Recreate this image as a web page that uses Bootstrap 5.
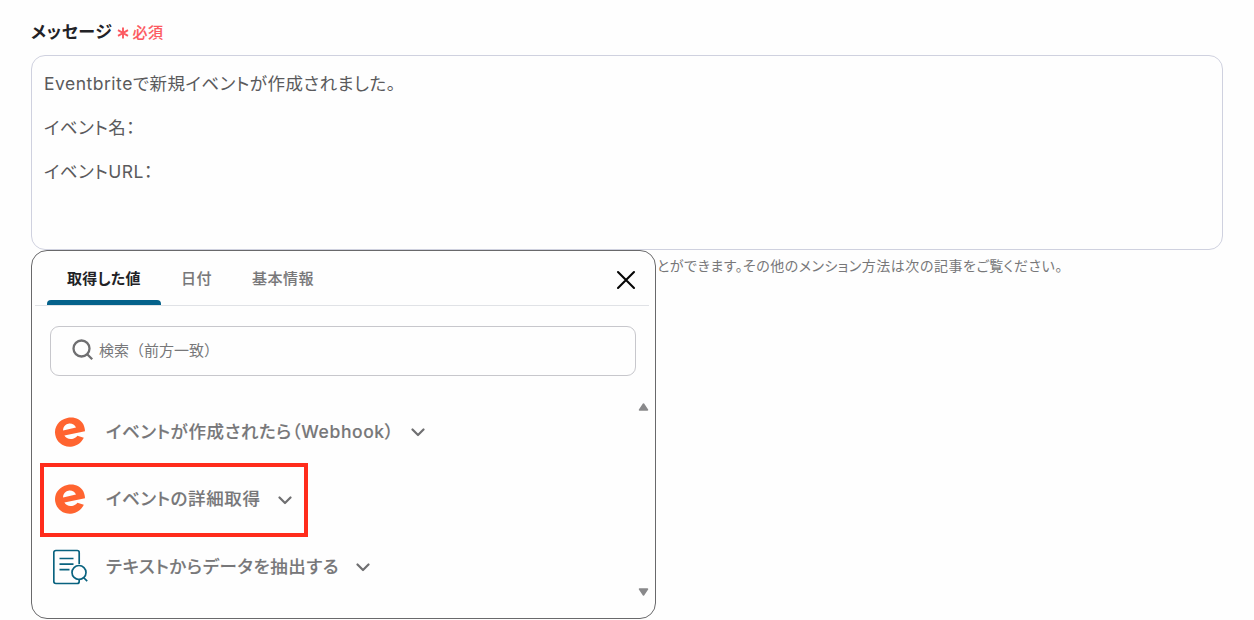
<!DOCTYPE html>
<html lang="ja">
<head>
    <meta charset="UTF-8">
    <title>メッセージ</title>
    <meta name="viewport" content="width=device-width, initial-scale=1">
    <!-- Bootstrap CDN -->
    <link href="https://cdn.jsdelivr.net/npm/bootstrap@5.3.0/dist/css/bootstrap.min.css" rel="stylesheet">
    <style>
        body {
            background: #fefefe;
            color: #5a5a5c;
            font-family: Inter, "Noto Sans CJK JP", sans-serif;
            font-feature-settings: "palt";
            height: 620px;
            overflow: hidden;
        }
        .message-form { padding: 20px 31px 0; }
        .field-label { height: 24px; line-height: 24px; margin-bottom: 11px; }
        .label-text { color: #222226; font-size: 17px; font-weight: 700; letter-spacing: .6px; }
        .required-text { color: #fc5a61; font-size: 15px; font-weight: 500; letter-spacing: .45px; padding-top: 1px; margin-left: 4px; -webkit-text-stroke: .12px; }
        .message-box {
            height: 195px;
            border: 1px solid #cfd1df;
            border-radius: 14px;
            padding: 6px 12px;
            font-size: 17.5px;
            line-height: 44px;
            letter-spacing: .5px;
        }
        .hint-text { padding-left: 626px; font-size: 14px; line-height: 20px; padding-top: 6px; color: #777779; letter-spacing: .52px; }
        .value-menu {
            top: 195px;
            left: 0;
            width: 625px;
            height: 369px;
            background: #fefefe;
            border: 1px solid #69696b;
            border-radius: 16px;
        }
        .tab-bar { height: 55px; margin: 0 6px 0 3px; padding-left: 12px; border-bottom: 1px solid #e0e2e6; }
        .tab-item { font-size: 15px; font-weight: 500; letter-spacing: .5px; line-height: 56px; color: #777779; padding: 0 20px; white-space: nowrap; -webkit-text-stroke: .12px; }
        .tab-current { width: 114px; height: 54px; letter-spacing: .25px; color: #222226; font-weight: 700; -webkit-text-stroke: 0; }
        .tab-current::after { content: ""; display: block; height: 5px; margin: -7px -20px 0; background: #05628b; border-radius: 4px 4px 0 0; }
        .close-btn { padding: 4px 13.5px 0 0; }
        .search-box { height: 50px; margin: 20px 19px 0 18px; padding-left: 21px; gap: 5px; border: 1px solid #c7c7cc; border-radius: 9px; font-size: 15px; font-feature-settings: normal; color: #777779; }
        .search-box svg { margin-top: -2px; }
        .source-list { height: 207px; margin: 22px 4px 0 8px; }
        .source-item { height: 67.5px; padding-left: 13px; font-size: 17.5px; font-weight: 500; letter-spacing: .6px; color: #777779; }
        .source-item span { -webkit-text-stroke: .12px; }
        .source-icon { width: 36px; height: 36px; margin-right: 17px; }
        .item-chevron { margin: 2px 0 0 17px; }
        .picked { top: -3px; left: 0; width: 268px; height: 74px; border: 4px solid #ff2c1c; }
        .scroll-track { width: 16px; padding: 5px 0 9px; }
    </style>
</head>
<body>
<svg class="d-none">
    <symbol id="brand-e" viewBox="0 0 36 36">
        <path fill="#ff6430" fill-rule="evenodd" d="M14.200 3.900C21 2.300 27.500 5 30.300 10.300c1.100 2.200 1.600 4.500 1.700 6.900L11.400 21.600c1.500 2.700 4.600 4 7.800 3.300 2.200-.5 3.800-1.400 5.200-3.100l6.400 1.900c-2 4.400-6.200 7.800-11.300 8.700C11 34 3.800 28.600 2.300 21 .7 13 5.800 5.700 14.200 3.900zM15.400 9.700c-3.200.7-5.400 3.300-5.300 6.700l12.900-2.900c-1.400-3-4.500-4.500-7.600-3.800z"/>
    </symbol>
    <symbol id="chevron" viewBox="0 0 14 9">
        <path fill="none" stroke="#6f6f71" stroke-width="2.200" stroke-linecap="round" stroke-linejoin="round" d="M1.500 1.500 7 7l5.500-5.500"/>
    </symbol>
</svg>
<main class="message-form">
    <div class="field-label d-flex">
        <span class="label-text">メッセージ</span>
        <span class="required-text d-flex align-items-center">
            <svg class="me-1" width="12" height="12" viewBox="0 0 12 12"><path d="M6 .5v11M1 3.200l10 5.600M11 3.200 1 8.800" stroke="#fc5a61" stroke-width="1.900" fill="none"/></svg>必須
        </span>
    </div>
    <div class="position-relative">
        <div class="message-box">
            <div>Eventbriteで新規イベントが作成されました。</div>
            <div>イベント名：</div>
            <div>イベントURL：</div>
        </div>
        <div class="hint-text">とができます。その他のメンション方法は次の記事をご覧ください。</div>

        <!-- Value picker -->
        <div class="value-menu position-absolute">
            <div class="tab-bar d-flex">
                <div class="tab-item tab-current">取得した値</div>
                <div class="tab-item">日付</div>
                <div class="tab-item">基本情報</div>
                <div class="close-btn ms-auto d-flex align-items-center">
                    <svg width="20" height="20" viewBox="0 0 20 20"><path d="m2 2 16 16M18 2 2 18" stroke="#050505" stroke-width="2.100" stroke-linecap="round"/></svg>
                </div>
            </div>
            <div class="search-box d-flex align-items-center">
                <svg width="22" height="22" viewBox="0 0 22 22" fill="none" stroke="#6f6f71" stroke-width="2.300"><circle cx="9.500" cy="9.500" r="8"/><path d="m15.200 15.200 5 5"/></svg>
                <span>検索（前方一致）</span>
            </div>
            <div class="source-list d-flex">
                <div class="flex-grow-1">
                    <div class="source-item d-flex align-items-center">
                        <svg class="source-icon"><use href="#brand-e"/></svg>
                        <span>イベントが作成されたら（Webhook）</span>
                        <svg class="item-chevron" width="14" height="9"><use href="#chevron"/></svg>
                    </div>
                    <div class="source-item position-relative d-flex align-items-center">
                        <div class="picked position-absolute"></div>
                        <svg class="source-icon"><use href="#brand-e"/></svg>
                        <span>イベントの詳細取得</span>
                        <svg class="item-chevron" width="14" height="9"><use href="#chevron"/></svg>
                    </div>
                    <div class="source-item d-flex align-items-center">
                        <svg class="source-icon" viewBox="0 0 36 36" fill="none" stroke="#08627f" stroke-width="1.700"><path d="M26.200 15V3.500a2 2 0 0 0-2-2H2.800a2 2 0 0 0-2 2v29a2 2 0 0 0 2 2h21.400a2 2 0 0 0 2-2v-2.700"/><path d="M6.500 9.500h14M6.500 15.200h14M6.500 20.700h10M30.500 28.500l3.700 3.700"/><circle cx="26" cy="23.500" r="7"/></svg>
                        <span>テキストからデータを抽出する</span>
                        <svg class="item-chevron" width="14" height="9"><use href="#chevron"/></svg>
                    </div>
                </div>
                <div class="scroll-track d-flex flex-column justify-content-between align-items-center">
                    <svg width="11" height="8" viewBox="0 0 11 8"><path d="m5.500 1 4 6h-8z" fill="#89898b" stroke="#89898b" stroke-width="1.500" stroke-linejoin="round"/></svg>
                    <svg width="11" height="8" viewBox="0 0 11 8"><path d="m5.500 7 4-6h-8z" fill="#89898b" stroke="#89898b" stroke-width="1.500" stroke-linejoin="round"/></svg>
                </div>
            </div>
        </div>
    </div>
</main>
<script src="https://cdn.jsdelivr.net/npm/bootstrap@5.3.0/dist/js/bootstrap.bundle.min.js"></script>
</body>
</html>
